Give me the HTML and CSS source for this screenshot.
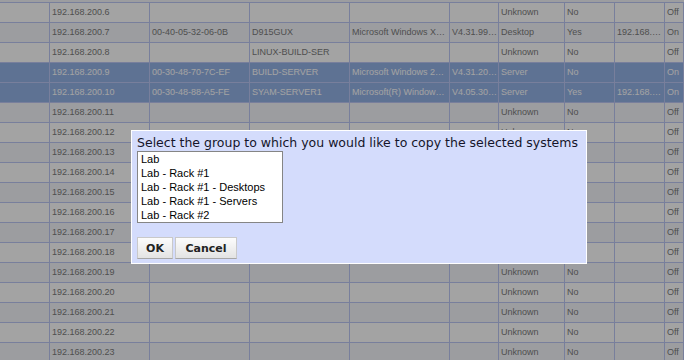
FILE: index.html
```html
<!DOCTYPE html>
<html>
<head>
<meta charset="utf-8">
<link rel="stylesheet" href="styles.css">
</head>
<body>
<div class="grid">
  <div class="row"><div class="c"></div><div class="c">192.168.200.6</div><div class="c"></div><div class="c"></div><div class="c"></div><div class="c"></div><div class="c">Unknown</div><div class="c">No</div><div class="c"></div><div class="c">Off</div></div>
  <div class="row alt"><div class="c"></div><div class="c">192.168.200.7</div><div class="c">00-40-05-32-06-0B</div><div class="c">D915GUX</div><div class="c">Microsoft Windows X…</div><div class="c ver">V4.31.99…</div><div class="c">Desktop</div><div class="c">Yes</div><div class="c ver">192.168.…</div><div class="c">On</div></div>
  <div class="row"><div class="c"></div><div class="c">192.168.200.8</div><div class="c"></div><div class="c">LINUX-BUILD-SER</div><div class="c"></div><div class="c"></div><div class="c">Unknown</div><div class="c">No</div><div class="c"></div><div class="c">Off</div></div>
  <div class="row sel"><div class="c"></div><div class="c">192.168.200.9</div><div class="c">00-30-48-70-7C-EF</div><div class="c">BUILD-SERVER</div><div class="c">Microsoft Windows 2…</div><div class="c ver">V4.31.20…</div><div class="c">Server</div><div class="c">No</div><div class="c ver"></div><div class="c">On</div></div>
  <div class="row sel"><div class="c"></div><div class="c">192.168.200.10</div><div class="c">00-30-48-88-A5-FE</div><div class="c">SYAM-SERVER1</div><div class="c">Microsoft(R) Window…</div><div class="c ver">V4.05.30…</div><div class="c">Server</div><div class="c">Yes</div><div class="c ver">192.168.…</div><div class="c">On</div></div>
  <div class="row alt"><div class="c"></div><div class="c">192.168.200.11</div><div class="c"></div><div class="c"></div><div class="c"></div><div class="c"></div><div class="c">Unknown</div><div class="c">No</div><div class="c"></div><div class="c">Off</div></div>
  <div class="row"><div class="c"></div><div class="c">192.168.200.12</div><div class="c"></div><div class="c"></div><div class="c"></div><div class="c"></div><div class="c">Unknown</div><div class="c">No</div><div class="c"></div><div class="c">Off</div></div>
  <div class="row alt"><div class="c"></div><div class="c">192.168.200.13</div><div class="c"></div><div class="c"></div><div class="c"></div><div class="c"></div><div class="c">Unknown</div><div class="c">No</div><div class="c"></div><div class="c">Off</div></div>
  <div class="row"><div class="c"></div><div class="c">192.168.200.14</div><div class="c"></div><div class="c"></div><div class="c"></div><div class="c"></div><div class="c">Unknown</div><div class="c">No</div><div class="c"></div><div class="c">Off</div></div>
  <div class="row alt"><div class="c"></div><div class="c">192.168.200.15</div><div class="c"></div><div class="c"></div><div class="c"></div><div class="c"></div><div class="c">Unknown</div><div class="c">No</div><div class="c"></div><div class="c">Off</div></div>
  <div class="row"><div class="c"></div><div class="c">192.168.200.16</div><div class="c"></div><div class="c"></div><div class="c"></div><div class="c"></div><div class="c">Unknown</div><div class="c">No</div><div class="c"></div><div class="c">Off</div></div>
  <div class="row alt"><div class="c"></div><div class="c">192.168.200.17</div><div class="c"></div><div class="c"></div><div class="c"></div><div class="c"></div><div class="c">Unknown</div><div class="c">No</div><div class="c"></div><div class="c">Off</div></div>
  <div class="row"><div class="c"></div><div class="c">192.168.200.18</div><div class="c"></div><div class="c"></div><div class="c"></div><div class="c"></div><div class="c">Unknown</div><div class="c">No</div><div class="c"></div><div class="c">Off</div></div>
  <div class="row alt"><div class="c"></div><div class="c">192.168.200.19</div><div class="c"></div><div class="c"></div><div class="c"></div><div class="c"></div><div class="c">Unknown</div><div class="c">No</div><div class="c"></div><div class="c">Off</div></div>
  <div class="row"><div class="c"></div><div class="c">192.168.200.20</div><div class="c"></div><div class="c"></div><div class="c"></div><div class="c"></div><div class="c">Unknown</div><div class="c">No</div><div class="c"></div><div class="c">Off</div></div>
  <div class="row alt"><div class="c"></div><div class="c">192.168.200.21</div><div class="c"></div><div class="c"></div><div class="c"></div><div class="c"></div><div class="c">Unknown</div><div class="c">No</div><div class="c"></div><div class="c">Off</div></div>
  <div class="row"><div class="c"></div><div class="c">192.168.200.22</div><div class="c"></div><div class="c"></div><div class="c"></div><div class="c"></div><div class="c">Unknown</div><div class="c">No</div><div class="c"></div><div class="c">Off</div></div>
  <div class="row alt"><div class="c"></div><div class="c">192.168.200.23</div><div class="c"></div><div class="c"></div><div class="c"></div><div class="c"></div><div class="c">Unknown</div><div class="c">No</div><div class="c"></div><div class="c">Off</div></div>
</div>

<div class="overlay"></div>

<div class="dialog">
  <div class="title">Select the group to which you would like to copy the selected systems</div>
  <div class="list">
    <div class="opt">Lab</div>
    <div class="opt">Lab - Rack #1</div>
    <div class="opt">Lab - Rack #1 - Desktops</div>
    <div class="opt">Lab - Rack #1 - Servers</div>
    <div class="opt">Lab - Rack #2</div>
  </div>
  <div class="buttons">
    <button class="btn ok">OK</button>
    <button class="btn cancel">Cancel</button>
  </div>
</div>
</body>
</html>
```
FILE: styles.css
```css
html, body {
  margin: 0;
  height: 100%;
}
body {
  padding-top: 2px;
  box-sizing: border-box;
  background: #f4f6fb;
  overflow: hidden;
  font-family: "Liberation Sans", Arial, sans-serif;
}
.grid {
  border-top: 1px solid #bcc7f5;
}
.row {
  display: grid;
  grid-template-columns: 50px 100px 100px 100px 100px 49px 66px 50px 50px 1fr;
  height: 20px;
  background: #ffffff;
  color: #7c7c7c;
}
.row.alt {
  background: #f4f6fb;
}
.row.sel {
  background: #94b2e6;
  color: #ffffff;
}
.c {
  box-sizing: border-box;
  border-right: 1px solid #bcc7f5;
  border-bottom: 1px solid #bcc7f5;
  padding: 0 1px 0 2px;
  font-size: 9px;
  line-height: 19px;
  white-space: nowrap;
  overflow: hidden;
}
.c.ver {
  padding-right: 0;
}
.overlay {
  position: fixed;
  inset: 0;
  background: rgba(0, 0, 0, 0.36);
}
.dialog {
  position: absolute;
  left: 131px;
  top: 130px;
  width: 456px;
  height: 134px;
  box-sizing: border-box;
  border: 1px solid #ffffff;
  background: #d4dcfc;
  padding: 4px 5px;
}
.title {
  font-family: "DejaVu Sans", Verdana, sans-serif;
  font-size: 12.5px;
  line-height: 16px;
  color: #15152a;
  white-space: nowrap;
}
.list {
  width: 146px;
  height: 72px;
  box-sizing: border-box;
  border: 1px solid #858585;
  background: #ffffff;
  font-family: "Liberation Sans", Arial, sans-serif;
  font-size: 11px;
  line-height: 14px;
  color: #000000;
}
.opt {
  height: 14px;
  padding-left: 3px;
}
.buttons {
  display: flex;
  gap: 2px;
  margin-top: 14px;
}
.btn {
  height: 22px;
  box-sizing: border-box;
  padding: 0;
  font-family: "DejaVu Sans", Verdana, sans-serif;
  font-weight: bold;
  font-size: 11px;
  color: #222222;
  border: 1px solid #c9c9c9;
  border-bottom-color: #a6a6a6;
  border-radius: 0;
  background: linear-gradient(#fcfcfc, #e3e3e3);
}
.ok {
  width: 36px;
}
.cancel {
  width: 62px;
}
```
